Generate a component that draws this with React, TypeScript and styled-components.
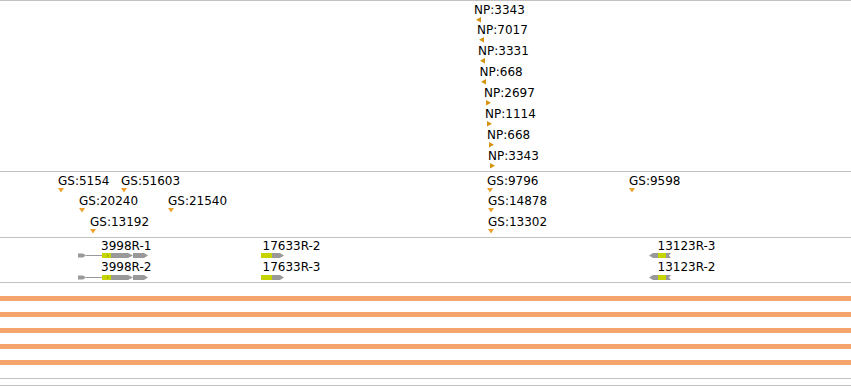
import styled, { createGlobalStyle } from "styled-components";

const GlobalStyle = createGlobalStyle`
  html, body {
    margin: 0;
    padding: 0;
    background: #fff;
  }
  body {
    font-family: "DejaVu Sans", "Liberation Sans", sans-serif;
    font-size: 12px;
    color: #000;
  }
`;

type Dir = "left" | "right" | "down";

const np: { label: string; x: number; dir: Dir }[] = [
  { label: "NP:3343", x: 474, dir: "left" },
  { label: "NP:7017", x: 477, dir: "left" },
  { label: "NP:3331", x: 478, dir: "left" },
  { label: "NP:668", x: 479.5, dir: "left" },
  { label: "NP:2697", x: 484, dir: "right" },
  { label: "NP:1114", x: 485, dir: "right" },
  { label: "NP:668", x: 487, dir: "right" },
  { label: "NP:3343", x: 488, dir: "right" },
];

const gs: { label: string; x: number; row: number }[] = [
  { label: "GS:5154", x: 58, row: 0 },
  { label: "GS:51603", x: 121, row: 0 },
  { label: "GS:9796", x: 487, row: 0 },
  { label: "GS:9598", x: 629, row: 0 },
  { label: "GS:20240", x: 79, row: 1 },
  { label: "GS:21540", x: 168, row: 1 },
  { label: "GS:14878", x: 488, row: 1 },
  { label: "GS:13192", x: 90, row: 2 },
  { label: "GS:13302", x: 488, row: 2 },
];

type Part = { kind: "grey" | "cds" | "mark"; pts: string };

const model3998: Part[] = [
  { kind: "grey", pts: "0,1.5 5,1.5 8,3.5 5,5.5 0,5.5" },
  { kind: "grey", pts: "8,3 24,3 24,4 8,4" },
  { kind: "cds", pts: "24,1 33,1 33,6 24,6" },
  { kind: "mark", pts: "29,1.5 31,3.5 29,5.5" },
  { kind: "grey", pts: "33,1 50,1 55,3.5 50,6 33,6" },
  { kind: "grey", pts: "55,1 66,1 70,3.5 66,6 55,6" },
];

const model17633: Part[] = [
  { kind: "cds", pts: "0,1 11,1 11,6 0,6" },
  { kind: "grey", pts: "11,1 19,1 23,3.5 19,6 11,6" },
];

const model13123: Part[] = [
  { kind: "grey", pts: "0,3.5 4,1 9,1 9,6 4,6" },
  { kind: "cds", pts: "9,1 17,1 17,6 9,6" },
  { kind: "grey", pts: "17,1 22,1 20,3.5 22,6 17,6" },
];

const genes = [
  { label: "3998R-1", labelX: 101, glyphX: 77.5, row: 0, parts: model3998 },
  { label: "3998R-2", labelX: 101, glyphX: 77.5, row: 1, parts: model3998 },
  { label: "17633R-2", labelX: 262.5, glyphX: 261, row: 0, parts: model17633 },
  { label: "17633R-3", labelX: 262.5, glyphX: 261, row: 1, parts: model17633 },
  { label: "13123R-3", labelX: 657.5, glyphX: 649, row: 0, parts: model13123 },
  { label: "13123R-2", labelX: 657.5, glyphX: 649, row: 1, parts: model13123 },
];

const fills = { grey: "#999", cds: "#c6d400", mark: "#a9b800" };

export default function App() {
  return (
    <>
      <GlobalStyle />
      <Browser>
        <Track $h={170}>
          {np.map((f, i) => (
            <Feature key={i} style={{ left: f.x, top: 1.6 + 20.85 * i }}>
              <Label>{f.label}</Label>
              <Marker dir={f.dir} color="#d4940f" offset={1.5} />
            </Feature>
          ))}
        </Track>

        <Track $h={65}>
          {gs.map((f, i) => (
            <Feature key={i} style={{ left: f.x, top: 1.6 + 20.5 * f.row }}>
              <Label>{f.label}</Label>
              <Marker dir="down" color="#eea22a" offset={0} />
            </Feature>
          ))}
        </Track>

        <Track $h={44}>
          {genes.map((g, i) => (
            <div key={i}>
              <Feature style={{ left: g.labelX, top: 0.6 + 21.7 * g.row }}>
                <Label>{g.label}</Label>
              </Feature>
              <GeneGlyph
                style={{ left: g.glyphX, top: 14.3 + 21.7 * g.row }}
                width={72}
                height={7}
              >
                {g.parts.map((p, j) => (
                  <polygon key={j} points={p.pts} fill={fills[p.kind]} />
                ))}
              </GeneGlyph>
            </div>
          ))}
        </Track>

        <Track $h={95}>
          <Bars>
            {[0, 1, 2, 3, 4].map((i) => (
              <Bar key={i} />
            ))}
          </Bars>
        </Track>

        <Track $h={6} $bottom />
      </Browser>
    </>
  );
}

function Marker({ dir, color, offset }: { dir: Dir; color: string; offset: number }) {
  const pts =
    dir === "left"
      ? "0,2.75 5,0 5,5.5"
      : dir === "right"
      ? "0,0 5,2.75 0,5.5"
      : "0,0 6,0 3,4.5";
  return (
    <MarkerSvg width={dir === "down" ? 6 : 5} height={dir === "down" ? 5 : 6} $offset={offset}>
      <polygon points={pts} fill={color} />
    </MarkerSvg>
  );
}

const Browser = styled.div`
  width: 851px;
  height: 386px;
  overflow: hidden;
  display: flex;
  flex-direction: column;
`;

const Track = styled.div<{ $h: number; $bottom?: boolean }>`
  position: relative;
  flex-shrink: 0;
  height: ${(p) => p.$h}px;
  border-top: 1px solid #c2c2c2;
  border-bottom: ${(p) => (p.$bottom ? "1px solid #c2c2c2" : "none")};
`;

const Feature = styled.div`
  position: absolute;
  display: flex;
  flex-direction: column;
  align-items: flex-start;
`;

const Label = styled.span`
  line-height: 14px;
  height: 14px;
  white-space: nowrap;
`;

const MarkerSvg = styled.svg<{ $offset: number }>`
  display: block;
  margin-left: ${(p) => p.$offset}px;
`;

const GeneGlyph = styled.svg`
  position: absolute;
  display: block;
`;

const Bars = styled.div`
  display: flex;
  flex-direction: column;
  gap: 11px;
  padding-top: 13px;
`;

const Bar = styled.div`
  height: 5px;
  background: #f4a46c;
`;
